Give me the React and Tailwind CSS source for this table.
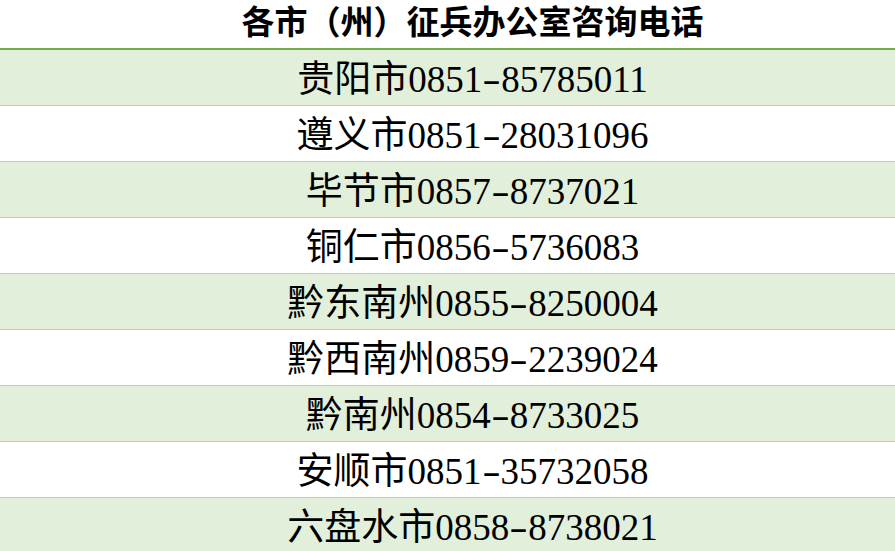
export default function App() {
  const rows = [
    "贵阳市0851-85785011",
    "遵义市0851-28031096",
    "毕节市0857-8737021",
    "铜仁市0856-5736083",
    "黔东南州0855-8250004",
    "黔西南州0859-2239024",
    "黔南州0854-8733025",
    "安顺市0851-35732058",
    "六盘水市0858-8738021",
  ];
  const font = { fontFamily: '"Liberation Serif", "Noto Sans CJK SC", serif' };
  return (
    <div className="w-[895px] h-[551px] overflow-hidden bg-white text-black" style={font}>
      <div className="h-[50px] flex items-center justify-center pl-[50px] pb-[2px] text-[33px] font-bold leading-none border-b-2 border-[#70ad47]">
        各市（州）征兵办公室咨询电话
      </div>
      {rows.map((r, i) => {
        const m = r.match(/^(\D+)(\d+)-(\d+)$/);
        return (
          <div
            key={i}
            className={`h-[56px] flex items-center justify-center pl-[50px] pt-[4px] border-b border-[#b4d79c] text-[37px] leading-none ${i % 2 === 0 ? "bg-[#e2efda]" : "bg-white"}`}
          >
            <span>{m[1]}</span>
            <span>{m[2]}</span>
            <span className="inline-block w-[19px] text-center scale-x-150">-</span>
            <span>{m[3]}</span>
          </div>
        );
      })}
    </div>
  );
}
